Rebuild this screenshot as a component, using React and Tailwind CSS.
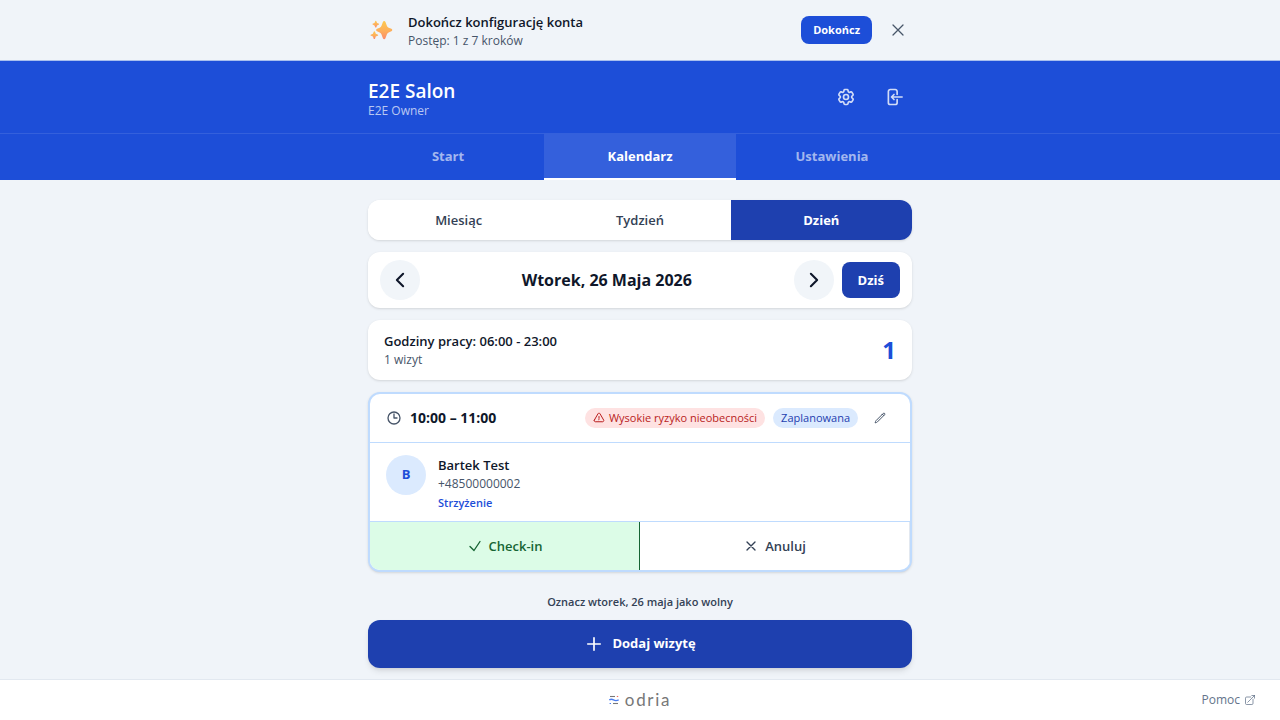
import React from "react";
import {
  HiOutlineXMark,
  HiOutlineCog6Tooth,
  HiOutlineArrowLeftOnRectangle,
  HiOutlineChevronLeft,
  HiOutlineChevronRight,
  HiOutlineClock,
  HiOutlineExclamationTriangle,
  HiOutlinePencil,
  HiOutlineCheck,
  HiOutlinePlus,
  HiOutlineArrowTopRightOnSquare,
} from "react-icons/hi2";

function Sparkles() {
  return (
    <svg viewBox="0 0 32 32" className="size-6" aria-hidden="true">
      <defs>
        <linearGradient id="spark" x1="0" y1="0" x2="0" y2="1">
          <stop offset="0" stopColor="#fcc94f" />
          <stop offset="0.55" stopColor="#fdae5c" />
          <stop offset="1" stopColor="#fb8a6c" />
        </linearGradient>
      </defs>
      <g fill="url(#spark)">
        <path d="M17.200 5.200c.6-1.700 2.800-1.700 3.400 0l2 5.400a4 4 0 0 0 2.300 2.300l3.600 1.400c1.600.6 1.600 2.900 0 3.500l-3.600 1.400a4 4 0 0 0-2.300 2.300l-2 5.500c-.6 1.700-2.800 1.700-3.400 0l-2-5.500a4 4 0 0 0-2.300-2.300l-3.500-1.400c-1.600-.6-1.600-2.900 0-3.500l3.500-1.400a4 4 0 0 0 2.300-2.300z" />
        <path d="M6.800 4.500c.3-.9 1.500-.9 1.800 0l.8 2 2 .8c.9.3.9 1.500 0 1.800l-2 .8-.8 2.100c-.3.9-1.500.9-1.800 0l-.8-2.100-2-.8c-.9-.3-.9-1.500 0-1.800l2-.8z" />
        <path d="M4.800 18.500c.3-1 1.700-1 2 0l.9 2.500 2.400.9c1 .3 1 1.600 0 1.900l-2.400.9-.9 2.500c-.3 1-1.700 1-2 0l-.9-2.500-2.400-.9c-1-.3-1-1.600 0-1.900l2.400-.9z" />
      </g>
    </svg>
  );
}

function LogoMark() {
  return (
    <svg viewBox="0 0 10 10" className="size-[10px]" fill="none" strokeWidth="1.1" aria-hidden="true">
      <path d="M1 1.500h5" stroke="#777" />
      <path d="M7.800 1.500h1.400" stroke="#ef6a5a" />
      <path d="M.3 4.900c1.500-1 2.700-.9 4.200 0s3.200 1 5.200 0" stroke="#4a7df0" strokeWidth="1.300" />
      <path d="M.6 8.500H2" stroke="#4a7df0" />
      <path d="M4 8.500h5" stroke="#777" />
    </svg>
  );
}

function Tab({ label, active }) {
  return (
    <a
      href="#"
      aria-current={active ? "page" : undefined}
      className={
        "flex-1 border-b-2 py-3 text-center text-[13px] leading-5 font-bold " +
        (active ? "border-white bg-white/10 text-white" : "border-transparent text-white/60")
      }
    >
      {label}
    </a>
  );
}

function ViewButton({ label, active }) {
  return (
    <button
      type="button"
      aria-pressed={!!active}
      className={
        "flex-1 py-[10px] text-[13px] leading-5 " +
        (active ? "bg-[#1e40af] font-bold text-white" : "bg-white font-semibold text-[#334155]")
      }
    >
      {label}
    </button>
  );
}

export default function App() {
  return (
    <div className="flex min-h-screen flex-col bg-[#f0f4f9] font-['Open_Sans','Noto_Sans',sans-serif] text-[#0f172a]">
      <section className="border-b border-[#a9bfee]">
        <div className="mx-auto flex h-[60px] w-full max-w-xl items-center gap-3 px-4">
          <div className="flex w-7 justify-center">
            <Sparkles />
          </div>
          <div className="flex-1 pt-0.5">
            <p className="text-[13px] leading-5 font-semibold">Dokończ konfigurację konta</p>
            <p className="text-xs leading-[18px] text-[#475569]">Postęp: 1 z 7 kroków</p>
          </div>
          <button type="button" className="rounded-lg bg-[#1d4ed8] px-3 py-1.5 text-[11px] leading-4 font-bold text-white">
            Dokończ
          </button>
          <button type="button" aria-label="Zamknij" className="p-1 text-[#475569]">
            <HiOutlineXMark className="size-5" />
          </button>
        </div>
      </section>

      <header className="bg-[#1d4ed8] text-white">
        <div className="mx-auto flex h-[72px] w-full max-w-xl items-center justify-between px-4">
          <div className="pt-1">
            <h1 className="text-[19px] leading-6 font-semibold">E2E Salon</h1>
            <p className="text-xs leading-4 text-white/70">E2E Owner</p>
          </div>
          <div className="flex gap-3 text-white/80">
            <button type="button" aria-label="Konfiguracja" className="p-2">
              <HiOutlineCog6Tooth className="size-5" strokeWidth={2} />
            </button>
            <button type="button" aria-label="Wyloguj" className="p-2">
              <HiOutlineArrowLeftOnRectangle className="size-5" strokeWidth={2} />
            </button>
          </div>
        </div>
        <div className="border-t border-white/10">
          <nav className="mx-auto flex w-full max-w-xl">
            <Tab label="Start" />
            <Tab label="Kalendarz" active />
            <Tab label="Ustawienia" />
          </nav>
        </div>
      </header>

      <main className="mx-auto flex w-full max-w-xl flex-1 flex-col gap-3 px-4 pt-5 pb-[11px]">
        <div className="flex overflow-hidden rounded-xl bg-white shadow-sm">
          <ViewButton label="Miesiąc" />
          <ViewButton label="Tydzień" />
          <ViewButton label="Dzień" active />
        </div>

        <div className="flex items-center gap-2 rounded-xl bg-white px-3 py-2 shadow-sm">
          <button type="button" aria-label="Poprzedni dzień" className="rounded-full bg-[#f1f5f9] p-[10px]">
            <HiOutlineChevronLeft className="size-5" strokeWidth={2.5} />
          </button>
          <h2 className="flex-1 text-center text-base leading-6 font-bold">Wtorek, 26 Maja 2026</h2>
          <button type="button" aria-label="Następny dzień" className="rounded-full bg-[#f1f5f9] p-[10px]">
            <HiOutlineChevronRight className="size-5" strokeWidth={2.5} />
          </button>
          <button type="button" className="rounded-lg bg-[#1e40af] px-4 py-2 text-[13px] leading-5 font-bold text-white">
            Dziś
          </button>
        </div>

        <div className="flex items-center justify-between rounded-xl bg-white px-4 py-[11px] shadow-sm">
          <div>
            <p className="text-[13px] leading-5 font-semibold">Godziny pracy: 06:00 - 23:00</p>
            <p className="text-xs leading-[18px] text-[#475569]">1 wizyt</p>
          </div>
          <span className="text-2xl leading-8 font-bold text-[#1d4ed8]">1</span>
        </div>

        <article className="overflow-hidden rounded-xl border-2 border-[#bfdbfe] bg-white shadow-sm">
          <div className="flex h-[49px] items-center gap-2 border-b border-[#bfdbfe] px-4">
            <HiOutlineClock className="size-4 text-[#475569]" strokeWidth={2} />
            <span className="flex-1 text-sm leading-5 font-bold">10:00 – 11:00</span>
            <span className="flex items-center gap-1 rounded-full bg-[#fee2e2] px-2 py-0.5 text-[11px] leading-4 font-medium text-[#b91c1c]">
              <HiOutlineExclamationTriangle className="size-3" strokeWidth={2} />
              Wysokie ryzyko nieobecności
            </span>
            <span className="rounded-full bg-[#dbeafe] px-2 py-0.5 text-[11px] leading-4 font-medium text-[#1e40af]">
              Zaplanowana
            </span>
            <button type="button" aria-label="Edytuj wizytę" className="p-2 text-[#475569]">
              <HiOutlinePencil className="size-3" strokeWidth={2} />
            </button>
          </div>
          <div className="flex gap-3 px-4 pt-3 pb-2">
            <div className="flex size-10 items-center justify-center rounded-full bg-[#dbeafe] text-[13px] font-bold text-[#1d4ed8]">
              B
            </div>
            <div>
              <p className="text-[13px] leading-5 font-semibold">Bartek Test</p>
              <p className="text-xs leading-[18px] text-[#475569]">+48500000002</p>
              <p className="text-[11px] leading-5 font-semibold text-[#1d4ed8]">Strzyżenie</p>
            </div>
          </div>
          <div className="grid grid-cols-2 border-t border-[#bfdbfe] text-[13px] leading-5 font-semibold">
            <button type="button" className="flex h-12 items-center justify-center gap-1.5 border-r border-[#166534] bg-[#dcfce7] text-[#166534]">
              <HiOutlineCheck className="size-4" strokeWidth={2} />
              Check-in
            </button>
            <button type="button" className="flex h-12 items-center justify-center gap-1.5 border-r border-[#e2e8f0] text-[#334155]">
              <HiOutlineXMark className="size-4" strokeWidth={2} />
              Anuluj
            </button>
          </div>
        </article>

        <div className="flex flex-col">
          <button type="button" className="py-2 text-[11px] leading-5 font-semibold text-[#334155]">
            Oznacz wtorek, 26 maja jako wolny
          </button>
          <button type="button" className="flex h-12 items-center justify-center gap-2 rounded-xl bg-[#1e40af] text-[13px] font-bold text-white shadow-md">
            <HiOutlinePlus className="size-5" strokeWidth={2} />
            Dodaj wizytę
          </button>
        </div>
      </main>

      <footer className="grid grid-cols-3 items-center border-t border-[#e2e8f0] bg-white px-6 py-3">
        <div className="col-start-2 flex items-center justify-center gap-1.5">
          <LogoMark />
          <span className="font-[Lato] text-[17px] leading-4 tracking-widest text-[#777]">odria</span>
        </div>
        <a href="#" className="flex items-center justify-end gap-1 text-xs leading-4 text-[#64748b]">
          Pomoc
          <HiOutlineArrowTopRightOnSquare className="size-3" />
        </a>
      </footer>
    </div>
  );
}
